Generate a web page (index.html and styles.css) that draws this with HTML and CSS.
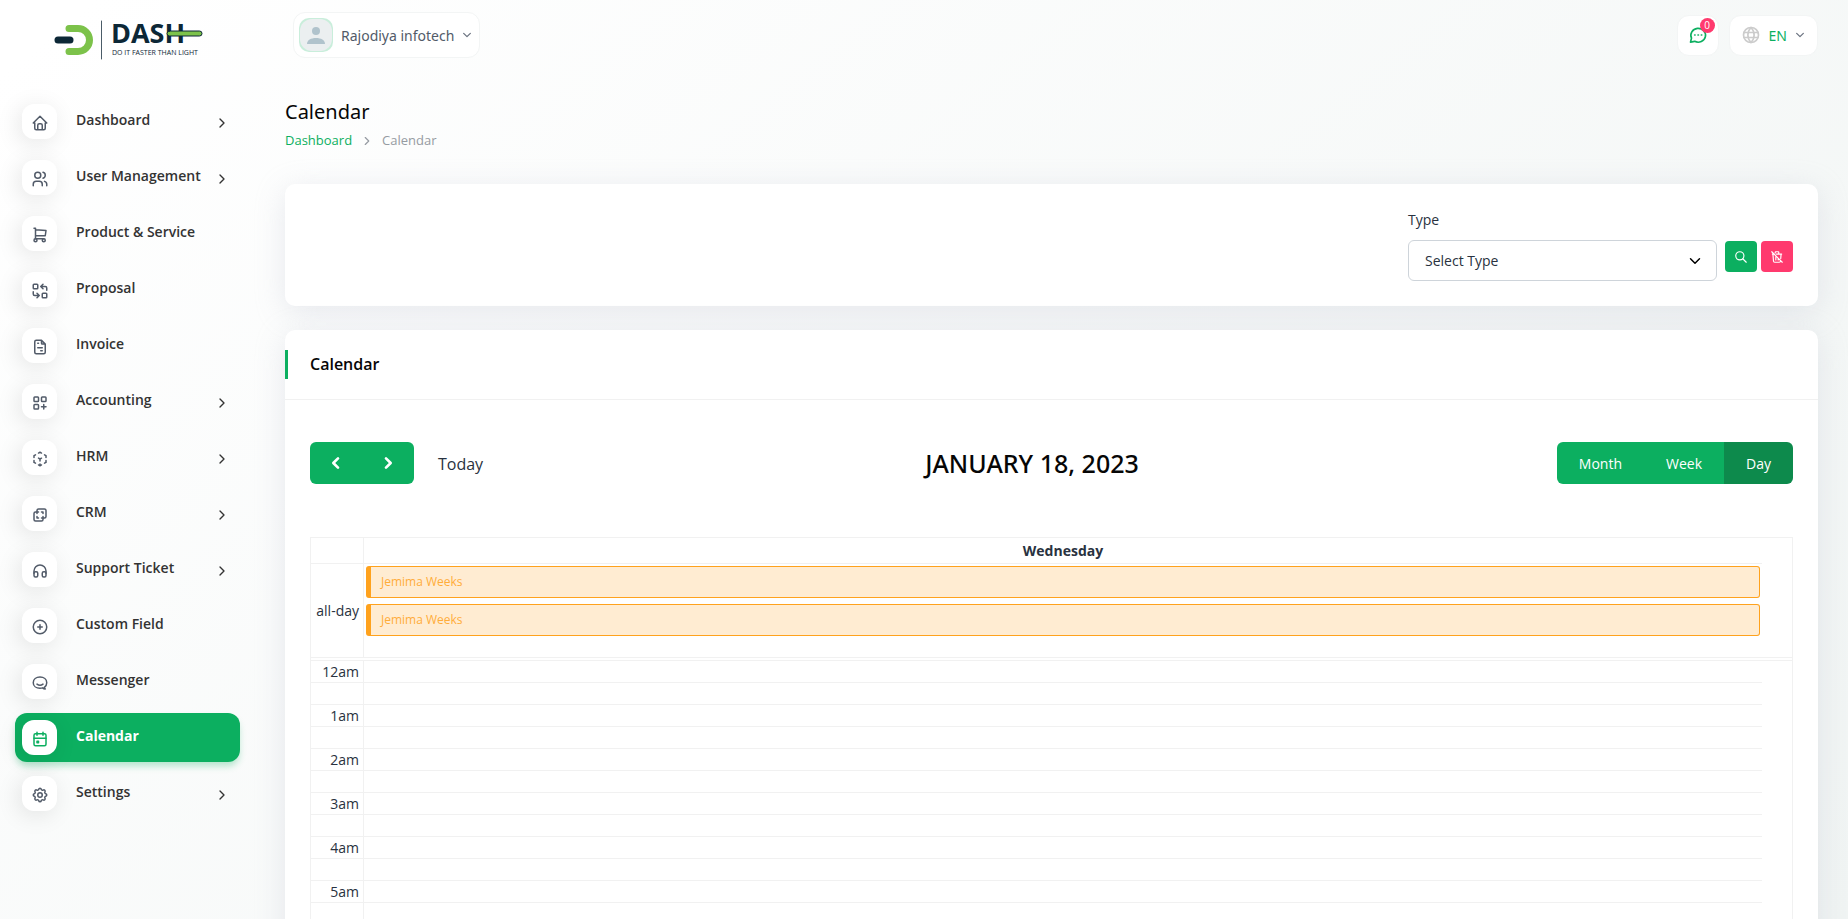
FILE: index.html
```
<!DOCTYPE html>
<html lang="en">
<head>
    <meta charset="UTF-8">
    <meta name="viewport" content="width=device-width, initial-scale=1.0">
    <title>Calendar</title>
    <link rel="stylesheet" href="styles.css">
</head>
<body>
    <!-- Sidebar -->
    <aside class="sidebar">
        <a href="#" class="logo" aria-label="Dash">
            <svg width="150" height="40" viewBox="0 0 150 40">
                <path d="M15 8.500h9a11.500 11.500 0 0 1 0 23h-9" fill="none" stroke="#7cc24a" stroke-width="7" stroke-linecap="round"/>
                <path d="M4 20h12" stroke="#0c2736" stroke-width="7" stroke-linecap="round"/>
                <path d="M47.500 1v38" stroke="#4a5c68" stroke-width="1"/>
                <text x="57" y="23" class="logo-name">DASH</text>
                <rect x="113" y="11" width="35" height="5" rx="2.500" fill="#7cc24a" stroke="#0c2736" stroke-width="1"/>
                <text x="58" y="35" class="logo-tag">DO IT FASTER THAN LIGHT</text>
            </svg>
        </a>
        <nav class="menu">
            <a href="#" class="menu-item">
                <span class="menu-icon"><svg viewBox="0 0 24 24"><path d="M5 12H3l9-9 9 9h-2M5 12v7a2 2 0 0 0 2 2h10a2 2 0 0 0 2-2v-7M9 21v-6a2 2 0 0 1 2-2h2a2 2 0 0 1 2 2v6"/></svg></span>
                <span class="menu-text">Dashboard</span>
                <svg class="arrow" viewBox="0 0 24 24"><path d="M9 6l6 6-6 6"/></svg>
            </a>
            <a href="#" class="menu-item">
                <span class="menu-icon"><svg viewBox="0 0 24 24"><circle cx="9" cy="7" r="4"/><path d="M3 21v-2a4 4 0 0 1 4-4h4a4 4 0 0 1 4 4v2M16 3.130a4 4 0 0 1 0 7.750M21 21v-2a4 4 0 0 0-3-3.850"/></svg></span>
                <span class="menu-text">User Management</span>
                <svg class="arrow" viewBox="0 0 24 24"><path d="M9 6l6 6-6 6"/></svg>
            </a>
            <a href="#" class="menu-item">
                <span class="menu-icon"><svg viewBox="0 0 24 24"><circle cx="6" cy="19" r="2"/><circle cx="17" cy="19" r="2"/><path d="M17 17H6V3H4M6 5l14 1-1 7H6"/></svg></span>
                <span class="menu-text">Product &amp; Service</span>
            </a>
            <a href="#" class="menu-item">
                <span class="menu-icon"><svg viewBox="0 0 24 24"><rect x="3" y="3" width="6" height="6" rx="1"/><rect x="15" y="15" width="6" height="6" rx="1"/><path d="M21 11V8a2 2 0 0 0-2-2h-6l3 3m0-6-3 3M3 13v3a2 2 0 0 0 2 2h6l-3-3m0 6 3-3"/></svg></span>
                <span class="menu-text">Proposal</span>
            </a>
            <a href="#" class="menu-item">
                <span class="menu-icon"><svg viewBox="0 0 24 24"><path d="M14 3v4a1 1 0 0 0 1 1h4M17 21H7a2 2 0 0 1-2-2V5a2 2 0 0 1 2-2h7l5 5v11a2 2 0 0 1-2 2zM9 7h1M9 13h6M13 17h2"/></svg></span>
                <span class="menu-text">Invoice</span>
            </a>
            <a href="#" class="menu-item">
                <span class="menu-icon"><svg viewBox="0 0 24 24"><rect x="4" y="4" width="6" height="6" rx="1"/><rect x="14" y="4" width="6" height="6" rx="1"/><rect x="4" y="14" width="6" height="6" rx="1"/><path d="M14 17h6M17 14v6"/></svg></span>
                <span class="menu-text">Accounting</span>
                <svg class="arrow" viewBox="0 0 24 24"><path d="M9 6l6 6-6 6"/></svg>
            </a>
            <a href="#" class="menu-item">
                <span class="menu-icon"><svg viewBox="0 0 24 24"><path d="M6 17.600l-2-1.100V14M4 10V7.500l2-1.100M10 4.100L12 3l2 1.100M18 6.400l2 1.100V10M20 14v2.500l-2 1.120M14 19.900L12 21l-2-1.100M12 12l2-1.100M12 12v2.500M12 18.500V21M12 12l-2-1.120"/></svg></span>
                <span class="menu-text">HRM</span>
                <svg class="arrow" viewBox="0 0 24 24"><path d="M9 6l6 6-6 6"/></svg>
            </a>
            <a href="#" class="menu-item">
                <span class="menu-icon"><svg viewBox="0 0 24 24"><path d="M16 16v2a2 2 0 0 1-2 2H6a2 2 0 0 1-2-2v-8a2 2 0 0 1 2-2h2V6a2 2 0 0 1 2-2h8a2 2 0 0 1 2 2v8a2 2 0 0 1-2 2h-2M10 8H8v2M8 14v2h2M14 8h2v2M16 14v2h-2"/></svg></span>
                <span class="menu-text">CRM</span>
                <svg class="arrow" viewBox="0 0 24 24"><path d="M9 6l6 6-6 6"/></svg>
            </a>
            <a href="#" class="menu-item">
                <span class="menu-icon"><svg viewBox="0 0 24 24"><rect x="4" y="13" width="5" height="7" rx="2"/><rect x="15" y="13" width="5" height="7" rx="2"/><path d="M4 15v-3a8 8 0 0 1 16 0v3"/></svg></span>
                <span class="menu-text">Support Ticket</span>
                <svg class="arrow" viewBox="0 0 24 24"><path d="M9 6l6 6-6 6"/></svg>
            </a>
            <a href="#" class="menu-item">
                <span class="menu-icon"><svg viewBox="0 0 24 24"><circle cx="12" cy="12" r="9"/><path d="M9 12h6M12 9v6"/></svg></span>
                <span class="menu-text">Custom Field</span>
            </a>
            <a href="#" class="menu-item">
                <span class="menu-icon"><svg viewBox="0 0 24 24"><path d="M17.800 17.750c2-1.500 3.200-3.700 3.200-6.250C21 7 17 4 12 4s-9 3-9 7.500S7 19 12 19c1.200 0 2.400-.2 3.500-.5 1 1 2.500 1.500 3.500 1.500-.7-.7-1-1.500-1.200-2.250zM8 13.500c2.500 2 5.500 2 8 0"/></svg></span>
                <span class="menu-text">Messenger</span>
            </a>
            <a href="#" class="menu-item active">
                <span class="menu-icon"><svg viewBox="0 0 24 24"><rect x="4" y="5" width="16" height="16" rx="2"/><path d="M16 3v4M8 3v4M4 11h16M8 15h2v2H8z"/></svg></span>
                <span class="menu-text">Calendar</span>
            </a>
            <a href="#" class="menu-item">
                <span class="menu-icon"><svg viewBox="0 0 24 24"><path d="M10.325 4.317c.426-1.756 2.924-1.756 3.350 0a1.724 1.724 0 0 0 2.573 1.066c1.543-.94 3.310.826 2.370 2.370a1.724 1.724 0 0 0 1.065 2.572c1.756.426 1.756 2.924 0 3.350a1.724 1.724 0 0 0-1.066 2.573c.94 1.543-.826 3.310-2.370 2.370a1.724 1.724 0 0 0-2.572 1.065c-.426 1.756-2.924 1.756-3.350 0a1.724 1.724 0 0 0-2.573-1.066c-1.543.94-3.310-.826-2.370-2.370a1.724 1.724 0 0 0-1.065-2.572c-1.756-.426-1.756-2.924 0-3.350a1.724 1.724 0 0 0 1.066-2.573c-.94-1.543.826-3.310 2.370-2.370 1 .608 2.296.07 2.572-1.065z"/><circle cx="12" cy="12" r="3"/></svg></span>
                <span class="menu-text">Settings</span>
                <svg class="arrow" viewBox="0 0 24 24"><path d="M9 6l6 6-6 6"/></svg>
            </a>
        </nav>
    </aside>

    <main class="main">
        <!-- Top bar -->
        <header class="topbar">
            <button type="button" class="user-btn">
                <svg class="avatar" width="34" height="34" viewBox="0 0 34 34">
                    <rect width="34" height="34" rx="10" fill="#c9eedb"/>
                    <rect x="1" y="1" width="32" height="32" rx="12" fill="#ebeff0"/>
                    <circle cx="17" cy="13" r="4" fill="#b0c3cc"/>
                    <path d="M8 26c0-4 4-6 9-6s9 2 9 6z" fill="#b0c3cc"/>
                </svg>
                <span>Rajodiya infotech</span>
                <svg class="caret" viewBox="0 0 24 24"><path d="M4 8l8 8 8-8"/></svg>
            </button>
            <div class="topbar-right">
                <button type="button" class="chat-btn" aria-label="Messages">
                    <svg width="20" height="20" viewBox="0 0 24 24"><path d="M3 20.500l1.200-4.800A8.800 8.300 0 1 1 8 19.600z"/><path d="M8 12h.5M12 12h.5M16 12h.5"/></svg>
                    <span class="badge">0</span>
                </button>
                <button type="button" class="lang-btn">
                    <svg class="globe" width="20" height="20" viewBox="0 0 24 24"><circle cx="12" cy="12" r="9"/><path d="M3.500 9h17M3.500 15h17M12 3c-5 5-5 13 0 18M12 3c5 5 5 13 0 18"/></svg>
                    <span>EN</span>
                    <svg class="caret" viewBox="0 0 24 24"><path d="M4 8l8 8 8-8"/></svg>
                </button>
            </div>
        </header>

        <div class="page-header">
            <h1>Calendar</h1>
            <div class="breadcrumb">
                <a href="#">Dashboard</a>
                <svg viewBox="0 0 24 24"><path d="M9 6l6 6-6 6"/></svg>
                <span>Calendar</span>
            </div>
        </div>

        <!-- Filter -->
        <form class="card filter">
            <div class="field">
                <label for="type">Type</label>
                <select id="type">
                    <option>Select Type</option>
                </select>
            </div>
            <div class="filter-buttons">
                <button type="button" class="icon-btn" aria-label="Search"><svg viewBox="0 0 24 24"><circle cx="10" cy="10" r="7"/><path d="M21 21l-6-6"/></svg></button>
                <button type="button" class="icon-btn danger" aria-label="Reset"><svg viewBox="0 0 24 24"><path d="M3 3l18 18M4 7h3m4 0h9M10 11v6M14 14v3M5 7l1 12a2 2 0 0 0 2 2h8a2 2 0 0 0 2-2l.1-1.500M18.400 14.500L19 7M9 5V4a1 1 0 0 1 1-1h4a1 1 0 0 1 1 1v3"/></svg></button>
            </div>
        </form>

        <!-- Calendar -->
        <section class="card">
            <div class="card-header">
                <h2>Calendar</h2>
            </div>
            <div class="card-body">
                <div class="toolbar">
                    <div class="toolbar-left">
                        <div class="btn-group">
                            <button type="button" aria-label="Previous"><svg viewBox="0 0 24 24"><path d="M15 5l-7 7 7 7"/></svg></button>
                            <button type="button" aria-label="Next"><svg viewBox="0 0 24 24"><path d="M9 5l7 7-7 7"/></svg></button>
                        </div>
                        <button type="button" class="today-btn">Today</button>
                    </div>
                    <h3>JANUARY 18, 2023</h3>
                    <div class="btn-group">
                        <button type="button">Month</button>
                        <button type="button">Week</button>
                        <button type="button" class="current">Day</button>
                    </div>
                </div>

                <table class="day-table">
                    <colgroup>
                        <col class="col-axis">
                        <col>
                        <col class="col-gutter">
                    </colgroup>
                    <thead>
                        <tr><th class="axis"></th><th>Wednesday</th><th class="gutter"></th></tr>
                    </thead>
                    <tbody id="slots">
                        <tr class="all-day">
                            <td class="axis">all-day</td>
                            <td class="events">
                                <a href="#" class="event">Jemima Weeks</a>
                                <a href="#" class="event">Jemima Weeks</a>
                            </td>
                            <td></td>
                        </tr>
                        <tr class="divider"><td colspan="3"></td></tr>
                    </tbody>
                </table>
            </div>
        </section>
    </main>

    <script>
        // two half hour rows for each hour of the day
        const slots = document.getElementById('slots');

        for (let hour = 0; hour < 24; hour++) {
            const label = (hour % 12 || 12) + (hour < 12 ? 'am' : 'pm');
            slots.insertAdjacentHTML('beforeend',
                `<tr class="slot"><td class="axis">${label}</td><td></td><td class="gutter"></td></tr>
                 <tr class="slot"><td class="axis"></td><td></td><td class="gutter"></td></tr>`);
        }
    </script>
</body>
</html>
```
FILE: styles.css
```
* {
    box-sizing: border-box;
}

body {
    margin: 0;
    display: flex;
    height: 100vh;
    overflow: hidden;
    font-family: "Open Sans", sans-serif;
    font-size: 14px;
    line-height: 21px;
    color: #293240;
    background: linear-gradient(141deg, rgba(240, 244, 243, 0) 3%, #f0f4f3 100%) #fff;
}

a {
    text-decoration: none;
    color: inherit;
}

button,
select {
    font: inherit;
    cursor: pointer;
}

h1, h2, h3 {
    margin: 0;
    color: #060606;
}

svg {
    fill: none;
    stroke: currentColor;
    stroke-width: 2;
    stroke-linecap: round;
    stroke-linejoin: round;
    flex-shrink: 0;
}

/* Sidebar */
.sidebar {
    width: 255px;
    flex-shrink: 0;
    padding: 0 15px;
}

.logo {
    display: flex;
    align-items: center;
    height: 80px;
    padding-left: 39px;
}

.logo svg {
    stroke: none;
}

.logo-name {
    font-size: 27px;
    font-weight: 700;
    fill: #0c2736;
}

.logo-tag {
    font-size: 7px;
    fill: #0c2736;
}

.menu {
    display: flex;
    flex-direction: column;
    gap: 7px;
    padding-top: 17px;
}

.menu-item {
    display: flex;
    align-items: center;
    height: 49px;
    padding: 0 10px 0 7px;
    border-radius: 12px;
    color: #333;
    font-weight: 600;
}

.menu-icon {
    display: flex;
    align-items: center;
    justify-content: center;
    width: 35px;
    height: 35px;
    margin-right: 19px;
    padding-top: 2px;
    border-radius: 12px;
    background: #fff;
    color: #525b69;
    box-shadow: -3px 4px 23px rgba(0, 0, 0, 0.1);
}

.menu-icon svg {
    width: 18px;
    height: 18px;
}

.menu-text {
    flex: 1;
    padding-bottom: 5px;
}

.arrow {
    width: 16px;
    height: 16px;
    margin-top: 3px;
}

.menu-item.active {
    background: #0caf60;
    color: #fff;
    font-weight: 700;
    box-shadow: 0 5px 7px -1px rgba(12, 175, 96, 0.3);
}

.menu-item.active .menu-icon {
    color: #0caf60;
}

/* Top bar */
.main {
    flex: 1;
    min-width: 0;
    padding: 0 30px;
}

.topbar {
    display: flex;
    align-items: center;
    justify-content: space-between;
    height: 70px;
    padding-left: 8px;
}

.user-btn,
.chat-btn,
.lang-btn {
    display: flex;
    align-items: center;
    border: 1px solid #f3f5f5;
    border-radius: 12px;
    background: #fff;
}

.user-btn {
    gap: 8px;
    height: 46px;
    padding: 0 7px 0 5px;
    color: #525b69;
    font-family: "Noto Sans", sans-serif;
}

.avatar {
    stroke: none;
}

.caret {
    width: 10px;
    height: 10px;
    stroke-width: 3;
    color: #6b7380;
}

.topbar-right {
    display: flex;
    gap: 10px;
}

.chat-btn {
    position: relative;
    justify-content: center;
    width: 42px;
    height: 41px;
    padding: 0;
    color: #0caf60;
}

.badge {
    position: absolute;
    top: 2px;
    right: 3px;
    width: 15px;
    height: 15px;
    border-radius: 50%;
    background: #ff3a6e;
    color: #fff;
    font-size: 10px;
    line-height: 14px;
}

.lang-btn {
    gap: 8px;
    height: 41px;
    padding: 0 12px 0 11px;
    color: #0caf60;
    font-family: "Noto Sans", sans-serif;
}

.globe {
    color: #ccc;
}

/* Page header */
.page-header {
    padding: 27px 0 33px;
}

h1 {
    font-family: "Noto Sans", sans-serif;
    font-size: 20px;
    line-height: 30px;
    font-weight: 400;
}

.breadcrumb {
    display: flex;
    align-items: center;
    gap: 8px;
    padding-top: 3px;
    font-size: 13px;
    color: #969ba2;
}

.breadcrumb a {
    color: #0caf60;
}

.breadcrumb svg {
    width: 14px;
    height: 14px;
}

/* Cards */
.card {
    margin-bottom: 24px;
    border-radius: 10px;
    background: #fff;
    box-shadow: 0 6px 30px rgba(182, 186, 203, 0.3);
}

.filter {
    display: flex;
    justify-content: flex-end;
    align-items: flex-end;
    gap: 8px;
    padding: 25px;
}

.field {
    display: flex;
    flex-direction: column;
    gap: 10px;
    width: 309px;
}

.field select {
    appearance: none;
    height: 41px;
    padding: 0 16px;
    border: 1px solid #ced4da;
    border-radius: 6px;
    color: #293240;
    background: #fff url("data:image/svg+xml,%3Csvg xmlns='http://www.w3.org/2000/svg' viewBox='0 0 16 16'%3E%3Cpath fill='none' stroke='%23000' stroke-linecap='round' stroke-linejoin='round' stroke-width='2' d='M2 5l6 6 6-6'/%3E%3C/svg%3E") no-repeat right 15px center / 12px 12px;
}

.filter-buttons {
    display: flex;
    gap: 4px;
    padding-bottom: 9px;
}

.icon-btn {
    display: flex;
    align-items: center;
    justify-content: center;
    width: 32px;
    height: 31px;
    padding: 0;
    border: 0;
    border-radius: 4px;
    background: #0caf60;
    color: #fff;
}

.icon-btn.danger {
    background: #ff3a6e;
}

.icon-btn svg {
    width: 14px;
    height: 14px;
}

.card-header {
    padding: 20px 0;
    border-bottom: 1px solid #f1f1f1;
}

.card-header h2 {
    padding-left: 22px;
    border-left: 3px solid #0caf60;
    font-size: 16px;
    line-height: 29px;
    font-weight: 600;
}

.card-body {
    padding: 42px 25px 25px;
}

/* Calendar toolbar */
.toolbar {
    display: flex;
    align-items: center;
    justify-content: space-between;
    margin-bottom: 53px;
}

.toolbar-left {
    display: flex;
    align-items: center;
}

.toolbar h3 {
    font-family: "Noto Sans", sans-serif;
    font-size: 25px;
    line-height: 36px;
    font-weight: 500;
}

.btn-group {
    display: flex;
    overflow: hidden;
    border-radius: 6px;
}

.btn-group button {
    display: flex;
    align-items: center;
    height: 42px;
    padding: 0 22px;
    border: 0;
    background: #0caf60;
    color: #fff;
}

.btn-group svg {
    width: 16px;
    height: 16px;
    margin: 0 -4px;
    stroke-width: 4;
}

.btn-group .current {
    background: #0d8a4c;
}

.today-btn {
    padding: 2px 24px 0;
    border: 0;
    background: none;
    color: #293240;
    font-size: 16px;
}

/* Day table */
.day-table {
    width: 100%;
    table-layout: fixed;
    border: 1px solid #f1f1f1;
    border-collapse: separate;
    border-spacing: 0;
}

.col-axis {
    width: 53px;
}

.col-gutter {
    width: 30px;
}

.day-table th,
.day-table td {
    padding: 0;
    border-bottom: 1px solid #f1f1f1;
}

.day-table th {
    height: 26px;
    font-weight: 700;
}

.day-table .axis {
    padding-right: 4px;
    border-right: 1px solid #f1f1f1;
    text-align: right;
}

.day-table .gutter {
    border-bottom: 0;
}

.day-table .all-day td {
    height: 94px;
}

.day-table .divider td {
    height: 3px;
}

.day-table .slot td {
    height: 22px;
}

.day-table .events {
    padding: 2px 2px 0;
    vertical-align: top;
}

.event {
    display: block;
    height: 32px;
    margin-bottom: 6px;
    padding-left: 10px;
    border: 1px solid #ffa21d;
    border-left-width: 5px;
    border-radius: 3px;
    background: #ffecd2;
    color: #ffad3a;
    font-size: 12px;
    line-height: 29px;
}
```
